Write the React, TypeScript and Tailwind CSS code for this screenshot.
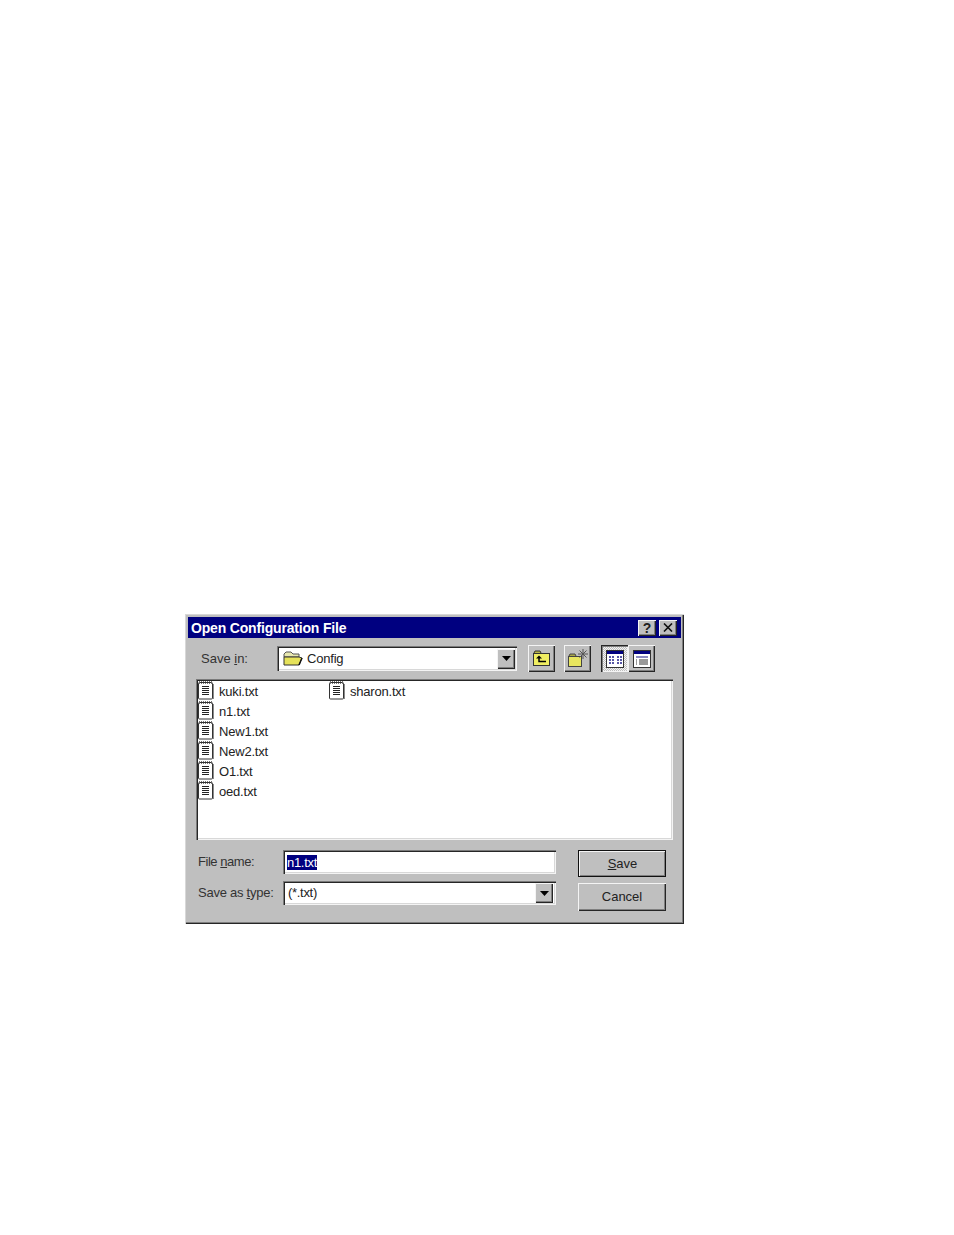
const sunken = "shadow-[inset_1px_1px_0_#7a7a7a,inset_2px_2px_0_#262626,inset_-1px_-1px_0_#f4f4f4,inset_-2px_-2px_0_#d8d8d8]";
const raised = "shadow-[inset_1px_1px_0_#f4f4f4,inset_-1px_-1px_0_#262626,inset_-2px_-2px_0_#7f7f7f]";

function DocIcon() {
  return (
    <svg width="16" height="20" viewBox="0 0 16 20" className="shrink-0">
      <rect x="0.5" y="2.5" width="14" height="16.5" rx="1" fill="#fff" stroke="#333" />
      <path d="M15.5 4v15" stroke="#8a8a8a" />
      <path d="M1 1.5h13M1 3.5h13" stroke="#777" strokeDasharray="1 1" />
      <path d="M4 6.5h7M4 8.5h7M4 10.5h7M4 12.5h7M4 14.5h7" stroke="#222" />
    </svg>
  );
}

function ArrowDown() {
  return (
    <svg width="9" height="5" viewBox="0 0 9 5">
      <path d="M0 0h9L4.5 5z" fill="#000" />
    </svg>
  );
}

function DropButton() {
  return (
    <div className={`flex h-[20px] w-[18px] items-center justify-center bg-[#bfbfbf] ${raised}`}>
      <ArrowDown />
    </div>
  );
}

function FileRow({ name }: { name: string }) {
  return (
    <div className="flex h-[20px] items-center">
      <DocIcon />
      <span className="ml-[5px] pt-[3px] text-[13px] tracking-[-0.2px] text-[#222]">{name}</span>
    </div>
  );
}

function ToolButton({ children, className = "" }: { children: React.ReactNode; className?: string }) {
  return (
    <div className={`flex h-[27px] w-[27px] items-center justify-center bg-[#bfbfbf] ${raised} ${className}`}>
      {children}
    </div>
  );
}

export default function App() {
  return (
    <div className="min-h-[1235px] bg-white pl-[185px] pt-[614px] font-['Liberation_Sans',Arial,sans-serif]">
      <div className="h-[310px] w-[499px] bg-[#bfbfbf] p-[3px] shadow-[inset_1px_1px_0_#d8d8d8,inset_-1px_-1px_0_#262626,inset_-2px_-2px_0_#7f7f7f]">
        {/* Title bar */}
        <div className="flex h-[21px] items-center justify-between bg-[#000080] pl-[3px] pr-[4px]">
          <span className="text-[14px] font-bold leading-none tracking-[-0.18px] text-white">Open Configuration File</span>
          <div className="flex gap-[3px]">
            <div className={`flex h-[16px] w-[18px] items-center justify-center bg-[#bfbfbf] text-[14px] font-bold leading-none text-[#222] ${raised}`}>?</div>
            <div className={`flex h-[16px] w-[18px] items-center justify-center bg-[#bfbfbf] ${raised}`}>
              <svg width="10" height="9" viewBox="0 0 10 9">
                <path d="M1 0.5l8 8M9 0.5l-8 8" stroke="#111" strokeWidth="1.6" />
              </svg>
            </div>
          </div>
        </div>

        {/* Save in row */}
        <div className="ml-[13px] mt-[7px] flex h-[27px] items-center">
          <span className="w-[76px] text-[13px] text-[#333]">
            Save <span className="underline">i</span>n:
          </span>
          <div className={`flex h-[25px] w-[240px] items-center justify-between bg-white pl-[6px] pr-[2px] ${sunken}`}>
            <div className="flex items-center gap-[4px]">
              <svg width="20" height="15" viewBox="0 0 20 15">
                <path d="M1 3l2-2h5l2 2h6v3H1z" fill="#e8e8b0" stroke="#555" />
                <path d="M1 14V6h15l3 1-3 7z" fill="#e6e25a" stroke="#333" />
                <path d="M16 14l3-7" stroke="#111" strokeWidth="1.5" />
              </svg>
              <span className="text-[13px] tracking-[-0.2px] text-[#222]">Config</span>
            </div>
            <DropButton />
          </div>
          <ToolButton className="ml-[11px]">
            <svg width="19" height="17" viewBox="0 0 19 17">
              <path d="M2 3l1-2h5l1 2" fill="#b8b64a" stroke="#333" />
              <rect x="1.5" y="3.5" width="16" height="12" fill="#f0ee62" stroke="#333" />
              <path d="M7 5.5L4 8.5h6z" fill="#000" />
              <path d="M7 8v3.5h7" fill="none" stroke="#000" strokeWidth="1.5" />
            </svg>
          </ToolButton>
          <ToolButton className="ml-[9px]">
            <svg width="21" height="19" viewBox="0 0 21 19">
              <path d="M2 7l1-2h5l1 2" fill="#a8a648" stroke="#444" />
              <rect x="1.5" y="7.5" width="13" height="10" fill="#e8e660" stroke="#444" />
              <path d="M16 0v10M11 5h10M12.5 1.5l7 7M19.5 1.5l-7 7" stroke="#555" />
            </svg>
          </ToolButton>
          <div className="ml-[10px] flex">
            <div className="flex h-[27px] w-[27px] items-center justify-center bg-[repeating-conic-gradient(#f4f4f4_0_25%,#bfbfbf_0_50%)] bg-[length:2px_2px] shadow-[inset_1px_1px_0_#262626,inset_2px_2px_0_#7f7f7f,inset_-1px_-1px_0_#f4f4f4]">
              <svg width="18" height="18" viewBox="0 0 18 18">
                <rect x="0.5" y="0.5" width="17" height="17" fill="#fff" stroke="#333" />
                <rect x="1" y="1" width="16" height="3" fill="#000080" />
                <path d="M3 7h2M6 7h2M11 7h2M14 7h2M3 10h2M6 10h2M11 10h2M14 10h2M3 13h2M6 13h2M11 13h2M14 13h2" stroke="#20208a" strokeWidth="1.6" />
              </svg>
            </div>
            <ToolButton>
              <svg width="18" height="18" viewBox="0 0 18 18">
                <rect x="0.5" y="0.5" width="17" height="17" fill="#fff" stroke="#333" />
                <rect x="1" y="1" width="16" height="3" fill="#000080" />
                <rect x="3" y="6" width="12" height="2" fill="#8a8ac0" />
                <path d="M3 10h1M6 10h9M3 12h1M6 12h9M3 14h1M6 14h9" stroke="#333" />
              </svg>
            </ToolButton>
          </div>
        </div>

        {/* File list */}
        <div className={`ml-[8px] mt-[7px] flex h-[161px] w-[477px] gap-[116px] bg-white pl-[2px] pt-[1px] ${sunken}`}>
          <div className="flex w-[15px] flex-col">
            <div className="w-[100px]">
              <FileRow name="kuki.txt" />
              <FileRow name="n1.txt" />
              <FileRow name="New1.txt" />
              <FileRow name="New2.txt" />
              <FileRow name="O1.txt" />
              <FileRow name="oed.txt" />
            </div>
          </div>
          <div>
            <FileRow name="sharon.txt" />
          </div>
        </div>

        {/* Name and type rows */}
        <div className="ml-[10px] mt-[10px] flex">
          <div>
            <div className="flex h-[24px] items-center">
              <span className="w-[86px] text-[13px] tracking-[-0.45px] text-[#333]">
                File <span className="underline">n</span>ame:
              </span>
              <div className={`-ml-px flex h-[24px] w-[273px] items-center bg-white pl-[4px] ${sunken}`}>
                <span className="bg-[#000080] text-[13px] leading-[15px] tracking-[-0.3px] text-white">n1.txt</span>
              </div>
            </div>
            <div className="mt-[7px] flex h-[24px] items-center">
              <span className="w-[86px] text-[13px] tracking-[-0.25px] text-[#333]">
                Save as <span className="underline">t</span>ype:
              </span>
              <div className={`-ml-px flex h-[24px] w-[273px] items-center justify-between bg-white pl-[5px] pr-[3px] ${sunken}`}>
                <span className="text-[13px] tracking-[-0.3px] text-[#222]">(*.txt)</span>
                <DropButton />
              </div>
            </div>
          </div>
          <div className="ml-[22px] flex flex-col">
            <div className="flex h-[27px] w-[88px] items-center justify-center border border-[#111] bg-[#bfbfbf] pl-px text-[13px] text-[#222] shadow-[inset_1px_1px_0_#f4f4f4,inset_-1px_-1px_0_#7f7f7f]">
              <span className="underline">S</span>ave
            </div>
            <div className={`mt-[6px] flex h-[28px] w-[88px] items-center justify-center bg-[#bfbfbf] text-[13px] text-[#222] ${raised}`}>
              Cancel
            </div>
          </div>
        </div>
      </div>
    </div>
  );
}
